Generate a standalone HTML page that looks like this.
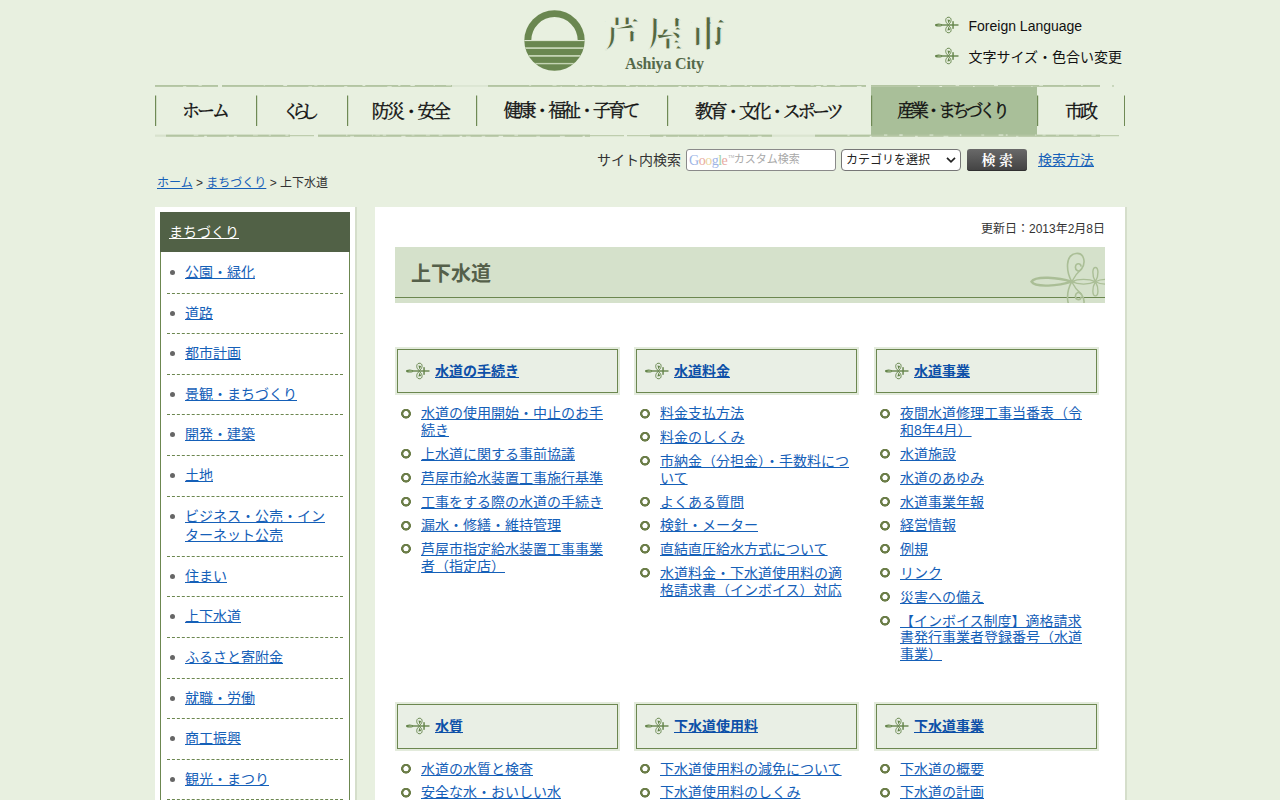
<!DOCTYPE html>
<html lang="ja">
<head>
<meta charset="utf-8">
<title>上下水道 - 芦屋市</title>
<style>
*{box-sizing:border-box}
html,body{margin:0;padding:0}
body{background:#e8f0e0;font-family:"Liberation Sans","Noto Sans CJK JP",sans-serif;font-size:14px;color:#333;width:1280px;height:800px;overflow:hidden;position:relative}
a{color:#1560b8}
#wrap{position:absolute;left:155px;top:0;width:970px;height:800px}
/* header */
#logo{position:absolute;left:368px;top:9px;width:210px;height:66px}
#hlinks{position:absolute;left:780px;top:0;width:200px}
#hlinks div{position:absolute;left:0;white-space:nowrap;color:#111;font-size:14px;line-height:20px}
#hlinks .ico{position:absolute;left:0;top:0}
#hlinks span{position:absolute;left:33.5px;top:0}
/* nav */
#nav{position:absolute;left:0;top:86px;width:970px;height:50px;white-space:nowrap;font-size:0}
#nav .nv{display:inline-block;height:50px;position:relative;vertical-align:top}
#nav .nv svg{display:block;position:relative}
#nav .act{background:#a9bf99}
#nav .sep{position:absolute;top:10px;width:1px;height:30px;background:#7a9160}
#navt,#navb{position:absolute;left:0}
/* search */
#search{position:absolute;left:0;top:149px;width:970px;height:22px}
#search .lbl{position:absolute;left:442px;top:0;line-height:22px;font-size:14px;color:#333}
#search .inp{position:absolute;left:531px;top:0;width:150px;height:22px;border:1px solid #8a8a8a;border-radius:3px;background:#fff}
#search .sel{position:absolute;left:686px;top:0;width:120px;height:22px;border:1px solid #767676;border-radius:4px;background:#fff;font-size:12px;line-height:20px;color:#222;padding-left:4px}
#search .btn{position:absolute;left:812px;top:0;width:60px;height:22px;border-radius:3px;background:linear-gradient(#696969,#424242);box-shadow:inset 0 -1px 0 #303030}
#search .how{position:absolute;left:883px;top:0;line-height:22px;font-size:14px}
/* breadcrumb */
#crumb{position:absolute;left:2px;top:174px;font-size:12px;line-height:18px;color:#333}
/* sidebar */
#side{position:absolute;left:0;top:207px;width:200px;height:620px;background:#fff;padding:5px;box-shadow:2px 0 0 #d5decb}
#side .box{border:1px solid #6c8750;border-top:0;height:620px}
#side h3{margin:0 -1px;height:40px;background:#516146;font-weight:normal;font-size:14px;line-height:40px;padding-left:9px}
#side h3 a{color:#fff}
#side ul{list-style:none;margin:0;padding:1px 6px 0 6px}
#side li{position:relative;padding:10px 10px 10px 18px;line-height:19.6px;border-bottom:1px dashed #6c8750}
#side li:before{content:"";position:absolute;left:3px;top:17px;width:5px;height:5px;border-radius:50%;background:#666}
/* main */
#main{position:absolute;left:220px;top:207px;width:750px;height:620px;background:#fff;box-shadow:2px 0 0 #d5decb}
#upd{position:absolute;right:20px;top:13px;font-size:12px;line-height:18px;color:#333}
#h1{position:absolute;left:20px;top:40px;width:710px;height:56px;background:#d5e1cb;overflow:hidden}
#h1 .ln{position:absolute;left:0;top:50px;width:710px;height:1px;background:#6c8750}
#h1 h1{margin:0;position:absolute;left:16px;top:13px;font-size:20px;line-height:28px;color:#55604a;font-weight:bold}
#h1 svg{position:absolute;right:0;top:0}
#cols{position:absolute;left:20px;top:140px;width:730px}
.col{float:left;width:225px;margin-right:14px;margin-bottom:32.25px}
.col.c2{margin-right:15px}
.col.c3{margin-right:0}
.col.clr{clear:left}
.col h2{margin:0 0 10px 0;border:2px solid #e3ebdc;font-size:14px;height:48.4px}
.col h2 .in{display:block;height:44.4px;border:1px solid #6c8750;background:#e9efe5;position:relative}
.col h2 .ico{position:absolute;left:8px;top:12px}
.col h2 a{position:absolute;left:37px;top:11px;line-height:20px;font-weight:bold;color:#0d50a8;white-space:nowrap}
.col ul{list-style:none;margin:0;padding:0}
.col li{position:relative;padding-left:26px;line-height:16.8px;margin-bottom:7px;width:216px}
.col li:before{content:"";position:absolute;left:5px;top:2.3px;width:12px;height:12px;background:radial-gradient(circle at 6px 5.7px,rgba(107,125,72,0) 2.3px,#6b7d48 2.9px,#6b7d48 4.6px,rgba(107,125,72,0) 5.2px)}
</style>
</head>
<body>
<div id="wrap">
 <div id="logo"><svg width="210" height="66" viewBox="0 0 210 66" style="position:absolute;left:0;top:0"><title>芦屋市</title><defs><clipPath id="lc"><circle cx="31.5" cy="31.5" r="30.2"/></clipPath></defs><circle cx="31.5" cy="31.5" r="30.2" fill="#6a8750"/><path d="M8.3 31.3A23.2 23.2 0 0 1 54.700 31.300z" fill="#e8f0e0"/><g clip-path="url(#lc)"><rect x="0" y="31" width="64" height="1.100" fill="#dbe5cf"/><rect x="0" y="38.2" width="64" height="1.8" fill="#c3d3b3"/><rect x="0" y="46" width="64" height="1.8" fill="#c3d3b3"/><rect x="0" y="53.9" width="64" height="1.4" fill="#c3d3b3"/></g><text x="81.3 124.5 167.5" y="37.900" font-family="'Liberation Serif','Noto Serif CJK SC',serif" font-weight="bold" font-size="35.500" fill="#546842" stroke="#e8f0e0" stroke-width="1">芦屋市</text></svg><div style="position:absolute;left:102px;top:45px;font-family:'Liberation Serif',serif;font-weight:bold;font-size:16px;line-height:20px;color:#55694a;white-space:nowrap;letter-spacing:-0.150px">Ashiya City</div></div>
 <div id="hlinks">
  <div style="top:16px"><svg class="ico" width="24" height="18" viewBox="0 0 24 18"><g fill="none" stroke="#64844a" stroke-width="0.950"><path d="M13.300 8.600C10.100 6.500 9.800 2 12.900 1.300c3-.6 4.200 2.700 2.200 5.500-.5.700-1.200 1.300-1.800 1.800z"/><path d="M13.300 9.400c-3.200 2.100-3.500 6.600-.4 7.300 3 .6 4.200-2.700 2.200-5.500-.5-.7-1.200-1.300-1.800-1.800z"/></g><g fill="#64844a"><path d="M12.400 3.600l2.800.5-1.700 3.300z"/><path d="M12.400 14.400l2.800-.5-1.700-3.300z"/><rect x="3.500" y="8.300" width="20" height="1.400"/><ellipse cx="3.600" cy="9" rx="3.600" ry="1.500"/><rect x="17.200" y="5.200" width="1.700" height="7.600" opacity=".85"/></g><ellipse cx="4.400" cy="9" rx="2.200" ry=".5" fill="#b2c69c"/></svg><span>Foreign Language</span></div>
  <div style="top:47px"><svg class="ico" width="24" height="18" viewBox="0 0 24 18"><g fill="none" stroke="#64844a" stroke-width="0.950"><path d="M13.300 8.600C10.100 6.500 9.800 2 12.900 1.300c3-.6 4.200 2.700 2.200 5.500-.5.700-1.200 1.300-1.800 1.800z"/><path d="M13.300 9.400c-3.200 2.100-3.500 6.600-.4 7.300 3 .6 4.200-2.700 2.200-5.500-.5-.7-1.200-1.300-1.800-1.800z"/></g><g fill="#64844a"><path d="M12.400 3.600l2.800.5-1.700 3.300z"/><path d="M12.400 14.400l2.800-.5-1.700-3.300z"/><rect x="3.500" y="8.300" width="20" height="1.400"/><ellipse cx="3.600" cy="9" rx="3.600" ry="1.500"/><rect x="17.200" y="5.200" width="1.700" height="7.600" opacity=".85"/></g><ellipse cx="4.400" cy="9" rx="2.200" ry=".5" fill="#b2c69c"/></svg><span>文字サイズ・色合い変更</span></div>
 </div>
 <div id="nav"><svg id="navt" width="970" height="54" viewBox="0 0 970 54" style="top:-2px;pointer-events:none;position:absolute;z-index:2"><rect x="0.0" y="1.00" width="63.0" height="1.90" fill="#b3c5a2" opacity="1"/><rect x="28.1" y="2.04" width="3.2" height="0.95" fill="#e8f0e0" opacity="0.73"/><rect x="43.5" y="0.90" width="3.3" height="0.95" fill="#e8f0e0" opacity="0.76"/><rect x="67.0" y="1.00" width="230.0" height="1.90" fill="#b3c5a2" opacity="1"/><rect x="108.7" y="0.90" width="1.4" height="0.95" fill="#e8f0e0" opacity="0.55"/><rect x="128.3" y="0.90" width="3.8" height="0.95" fill="#e8f0e0" opacity="0.99"/><rect x="153.4" y="2.04" width="3.6" height="0.95" fill="#e8f0e0" opacity="0.58"/><rect x="159.3" y="0.90" width="3.1" height="0.95" fill="#e8f0e0" opacity="0.60"/><rect x="169.2" y="0.90" width="1.1" height="0.95" fill="#e8f0e0" opacity="0.72"/><rect x="189.2" y="2.04" width="3.1" height="0.95" fill="#e8f0e0" opacity="0.75"/><rect x="207.5" y="0.90" width="2.8" height="0.95" fill="#e8f0e0" opacity="1.00"/><rect x="232.3" y="2.04" width="4.4" height="0.95" fill="#e8f0e0" opacity="0.66"/><rect x="243.2" y="0.90" width="2.2" height="0.95" fill="#e8f0e0" opacity="0.88"/><rect x="255.4" y="0.90" width="4.4" height="0.95" fill="#e8f0e0" opacity="0.98"/><rect x="278.7" y="0.90" width="1.0" height="0.95" fill="#e8f0e0" opacity="0.96"/><rect x="291.1" y="0.90" width="4.9" height="0.95" fill="#e8f0e0" opacity="0.54"/><rect x="297.0" y="1.00" width="36.0" height="1.90" fill="#b3c5a2" opacity="0.22"/><rect x="333.0" y="1.00" width="378.0" height="1.90" fill="#b3c5a2" opacity="1"/><rect x="374.1" y="0.90" width="2.1" height="0.95" fill="#e8f0e0" opacity="0.67"/><rect x="397.5" y="0.90" width="4.0" height="0.95" fill="#e8f0e0" opacity="0.62"/><rect x="405.6" y="2.04" width="1.2" height="0.95" fill="#e8f0e0" opacity="0.59"/><rect x="420.0" y="0.90" width="2.8" height="0.95" fill="#e8f0e0" opacity="0.87"/><rect x="427.4" y="0.90" width="3.6" height="0.95" fill="#e8f0e0" opacity="0.71"/><rect x="437.2" y="2.04" width="2.1" height="0.95" fill="#e8f0e0" opacity="0.90"/><rect x="447.4" y="0.90" width="4.5" height="0.95" fill="#e8f0e0" opacity="0.70"/><rect x="471.0" y="0.90" width="3.6" height="0.95" fill="#e8f0e0" opacity="0.99"/><rect x="480.8" y="2.04" width="2.0" height="0.95" fill="#e8f0e0" opacity="0.66"/><rect x="490.8" y="0.90" width="1.3" height="0.95" fill="#e8f0e0" opacity="0.79"/><rect x="499.0" y="0.90" width="3.4" height="0.95" fill="#e8f0e0" opacity="0.73"/><rect x="523.5" y="2.04" width="2.9" height="0.95" fill="#e8f0e0" opacity="0.93"/><rect x="532.1" y="2.04" width="1.6" height="0.95" fill="#e8f0e0" opacity="0.91"/><rect x="540.7" y="2.04" width="1.8" height="0.95" fill="#e8f0e0" opacity="0.97"/><rect x="548.4" y="2.04" width="4.8" height="0.95" fill="#e8f0e0" opacity="0.80"/><rect x="563.7" y="0.90" width="1.4" height="0.95" fill="#e8f0e0" opacity="0.98"/><rect x="571.8" y="0.90" width="3.8" height="0.95" fill="#e8f0e0" opacity="0.91"/><rect x="589.6" y="0.90" width="2.2" height="0.95" fill="#e8f0e0" opacity="0.86"/><rect x="595.1" y="2.04" width="1.9" height="0.95" fill="#e8f0e0" opacity="0.93"/><rect x="611.3" y="2.04" width="2.1" height="0.95" fill="#e8f0e0" opacity="0.60"/><rect x="615.8" y="0.90" width="2.1" height="0.95" fill="#e8f0e0" opacity="0.53"/><rect x="623.4" y="2.04" width="2.5" height="0.95" fill="#e8f0e0" opacity="0.57"/><rect x="635.1" y="2.04" width="4.6" height="0.95" fill="#e8f0e0" opacity="0.83"/><rect x="655.5" y="0.90" width="3.3" height="0.95" fill="#e8f0e0" opacity="0.52"/><rect x="661.2" y="2.04" width="4.6" height="0.95" fill="#e8f0e0" opacity="0.98"/><rect x="668.3" y="0.90" width="3.5" height="0.95" fill="#e8f0e0" opacity="0.87"/><rect x="680.2" y="0.90" width="5.0" height="0.95" fill="#e8f0e0" opacity="0.77"/><rect x="701.9" y="2.04" width="4.6" height="0.95" fill="#e8f0e0" opacity="0.85"/><rect x="716.0" y="1.00" width="229.0" height="1.90" fill="#b3c5a2" opacity="1"/><rect x="762.6" y="2.04" width="2.4" height="0.95" fill="#e8f0e0" opacity="0.95"/><rect x="784.4" y="2.04" width="2.7" height="0.95" fill="#e8f0e0" opacity="0.93"/><rect x="800.6" y="0.90" width="3.5" height="0.95" fill="#e8f0e0" opacity="0.79"/><rect x="818.2" y="2.04" width="1.3" height="0.95" fill="#e8f0e0" opacity="1.00"/><rect x="839.1" y="0.90" width="3.9" height="0.95" fill="#e8f0e0" opacity="0.87"/><rect x="856.7" y="2.04" width="2.8" height="0.95" fill="#e8f0e0" opacity="0.54"/><rect x="876.4" y="2.04" width="1.1" height="0.95" fill="#e8f0e0" opacity="0.74"/><rect x="884.2" y="0.90" width="3.8" height="0.95" fill="#e8f0e0" opacity="0.81"/><rect x="908.4" y="0.90" width="2.0" height="0.95" fill="#e8f0e0" opacity="0.65"/><rect x="926.0" y="0.90" width="1.8" height="0.95" fill="#e8f0e0" opacity="0.95"/><rect x="957.0" y="1.00" width="2.0" height="1.90" fill="#b3c5a2" opacity="0.6"/><rect x="0.0" y="50.60" width="11.0" height="2.20" fill="#b3c5a2" opacity="0.3"/><rect x="11.0" y="50.60" width="124.0" height="2.20" fill="#b3c5a2" opacity="1"/><rect x="38.7" y="50.50" width="4.6" height="1.10" fill="#e8f0e0" opacity="0.83"/><rect x="49.2" y="51.81" width="2.7" height="1.10" fill="#e8f0e0" opacity="0.96"/><rect x="71.5" y="51.81" width="2.5" height="1.10" fill="#e8f0e0" opacity="0.66"/><rect x="78.8" y="51.81" width="3.0" height="1.10" fill="#e8f0e0" opacity="0.92"/><rect x="98.0" y="50.50" width="4.8" height="1.10" fill="#e8f0e0" opacity="0.58"/><rect x="113.8" y="50.50" width="2.1" height="1.10" fill="#e8f0e0" opacity="0.71"/><rect x="130.4" y="50.50" width="3.0" height="1.10" fill="#e8f0e0" opacity="0.92"/><rect x="135.0" y="51.20" width="24.0" height="1.00" fill="#b3c5a2" opacity="1"/><rect x="163.0" y="50.60" width="272.0" height="2.20" fill="#b3c5a2" opacity="1"/><rect x="191.1" y="50.50" width="1.3" height="1.10" fill="#e8f0e0" opacity="0.94"/><rect x="195.2" y="51.81" width="3.8" height="1.10" fill="#e8f0e0" opacity="0.65"/><rect x="216.9" y="50.50" width="1.1" height="1.10" fill="#e8f0e0" opacity="0.73"/><rect x="220.5" y="50.50" width="4.3" height="1.10" fill="#e8f0e0" opacity="0.57"/><rect x="227.7" y="50.50" width="3.5" height="1.10" fill="#e8f0e0" opacity="0.81"/><rect x="246.3" y="51.81" width="4.2" height="1.10" fill="#e8f0e0" opacity="0.84"/><rect x="256.6" y="50.50" width="2.9" height="1.10" fill="#e8f0e0" opacity="0.51"/><rect x="270.9" y="50.50" width="3.9" height="1.10" fill="#e8f0e0" opacity="0.64"/><rect x="283.7" y="50.50" width="3.8" height="1.10" fill="#e8f0e0" opacity="0.81"/><rect x="304.6" y="51.81" width="2.6" height="1.10" fill="#e8f0e0" opacity="0.95"/><rect x="310.9" y="51.81" width="4.7" height="1.10" fill="#e8f0e0" opacity="0.56"/><rect x="326.7" y="51.81" width="3.5" height="1.10" fill="#e8f0e0" opacity="0.69"/><rect x="343.6" y="51.81" width="4.5" height="1.10" fill="#e8f0e0" opacity="0.97"/><rect x="359.4" y="50.50" width="3.6" height="1.10" fill="#e8f0e0" opacity="0.86"/><rect x="381.3" y="51.81" width="3.6" height="1.10" fill="#e8f0e0" opacity="0.61"/><rect x="404.9" y="51.81" width="4.9" height="1.10" fill="#e8f0e0" opacity="0.77"/><rect x="427.6" y="51.81" width="2.3" height="1.10" fill="#e8f0e0" opacity="0.93"/><rect x="435.0" y="51.20" width="34.0" height="1.00" fill="#b3c5a2" opacity="1"/><rect x="472.0" y="51.20" width="23.0" height="1.00" fill="#b3c5a2" opacity="1"/><rect x="495.0" y="50.60" width="122.0" height="2.20" fill="#b3c5a2" opacity="1"/><rect x="508.3" y="51.81" width="2.8" height="1.10" fill="#e8f0e0" opacity="0.88"/><rect x="522.8" y="51.81" width="1.1" height="1.10" fill="#e8f0e0" opacity="0.53"/><rect x="541.9" y="50.50" width="1.7" height="1.10" fill="#e8f0e0" opacity="0.89"/><rect x="548.4" y="50.50" width="1.6" height="1.10" fill="#e8f0e0" opacity="0.86"/><rect x="568.8" y="51.81" width="3.8" height="1.10" fill="#e8f0e0" opacity="0.75"/><rect x="593.6" y="50.50" width="1.3" height="1.10" fill="#e8f0e0" opacity="0.76"/><rect x="602.7" y="51.81" width="3.9" height="1.10" fill="#e8f0e0" opacity="0.76"/><rect x="617.0" y="50.60" width="43.0" height="2.20" fill="#b3c5a2" opacity="0.25"/><rect x="660.0" y="50.60" width="285.0" height="2.20" fill="#b3c5a2" opacity="1"/><rect x="692.4" y="50.50" width="2.2" height="1.10" fill="#e8f0e0" opacity="0.92"/><rect x="714.7" y="51.81" width="1.8" height="1.10" fill="#e8f0e0" opacity="0.98"/><rect x="729.0" y="50.50" width="3.3" height="1.10" fill="#e8f0e0" opacity="0.77"/><rect x="744.3" y="50.50" width="3.4" height="1.10" fill="#e8f0e0" opacity="0.98"/><rect x="760.1" y="51.81" width="2.6" height="1.10" fill="#e8f0e0" opacity="0.78"/><rect x="774.5" y="50.50" width="3.8" height="1.10" fill="#e8f0e0" opacity="0.77"/><rect x="788.5" y="51.81" width="4.8" height="1.10" fill="#e8f0e0" opacity="0.63"/><rect x="804.8" y="50.50" width="1.5" height="1.10" fill="#e8f0e0" opacity="0.91"/><rect x="826.3" y="50.50" width="2.9" height="1.10" fill="#e8f0e0" opacity="0.60"/><rect x="843.6" y="50.50" width="4.7" height="1.10" fill="#e8f0e0" opacity="0.89"/><rect x="850.8" y="50.50" width="1.8" height="1.10" fill="#e8f0e0" opacity="0.84"/><rect x="861.0" y="51.81" width="2.4" height="1.10" fill="#e8f0e0" opacity="0.55"/><rect x="880.0" y="50.50" width="1.5" height="1.10" fill="#e8f0e0" opacity="0.63"/><rect x="887.5" y="50.50" width="3.1" height="1.10" fill="#e8f0e0" opacity="0.69"/><rect x="900.9" y="50.50" width="3.1" height="1.10" fill="#e8f0e0" opacity="0.60"/><rect x="918.6" y="50.50" width="3.6" height="1.10" fill="#e8f0e0" opacity="0.93"/><rect x="936.4" y="50.50" width="4.4" height="1.10" fill="#e8f0e0" opacity="0.87"/><rect x="945.0" y="51.20" width="19.0" height="1.00" fill="#b3c5a2" opacity="1"/><rect x="0" y="11.5" width="1.2" height="30.5" fill="#6f8a55"/><rect x="101" y="11.5" width="1.2" height="30.5" fill="#6f8a55"/><rect x="192" y="11.5" width="1.2" height="30.5" fill="#6f8a55"/><rect x="321" y="11.5" width="1.2" height="30.5" fill="#6f8a55"/><rect x="512" y="11.5" width="1.2" height="30.5" fill="#6f8a55"/><rect x="716" y="11.5" width="1.2" height="30.5" fill="#6f8a55"/><rect x="882" y="11.5" width="1.2" height="30.5" fill="#6f8a55"/><rect x="969" y="11.5" width="1.2" height="30.5" fill="#6f8a55"/></svg><div class="act" style="position:absolute;left:716px;top:0.700px;width:166px;height:48.800px"></div><svg width="970" height="50" viewBox="0 0 970 50" style="position:absolute;left:0;top:0" fill="#111" stroke="#111" stroke-width="0.35" font-family="'Liberation Serif','Noto Serif CJK SC',serif" font-size="18" text-anchor="middle"><g><title>ホーム</title><text x="51" y="31.400" textLength="48" lengthAdjust="spacing">ホーム</text></g><g><title>くらし</title><text x="145.8" y="31.500" textLength="37" lengthAdjust="spacing">くらし</text></g><g><title>防災・安全</title><text x="256.3" y="31.500" textLength="79" lengthAdjust="spacing">防災・安全</text></g><g><title>健康・福祉・子育て</title><text x="417" y="31.400" textLength="137" lengthAdjust="spacing">健康・福祉・子育て</text></g><g><title>教育・文化・スポーツ</title><text x="614.5" y="31.500" textLength="149" lengthAdjust="spacing">教育・文化・スポーツ</text></g><g><title>産業・まちづくり</title><text x="798.8" y="31.400" textLength="113" lengthAdjust="spacing">産業・まちづくり</text></g><g><title>市政</title><text x="926.5" y="31.500" textLength="33" lengthAdjust="spacing">市政</text></g></svg></div>
 <div id="search">
  <span class="lbl">サイト内検索</span>
  <div class="inp"><span style="position:absolute;left:2px;top:-3px;font-family:'Liberation Serif',serif;font-size:14px;line-height:19px;letter-spacing:-0.500px;white-space:nowrap"><span style="color:#9db4e6">G</span><span style="color:#e8a9a0">o</span><span style="color:#ecd79b">o</span><span style="color:#9db4e6">g</span><span style="color:#a6d1a4">l</span><span style="color:#e8a9a0">e</span><span style="font-size:4px;color:#aaa;vertical-align:6.500px;letter-spacing:0;margin-left:1px">TM</span></span><span style="position:absolute;left:46.800px;top:-0.600px;font-size:11px;line-height:20px;color:#a8a8a8;white-space:nowrap">カスタム検索</span></div>
  <div class="sel">カテゴリを選択<svg width="12" height="8" viewBox="0 0 12 8" style="position:absolute;right:2.600px;top:5.800px"><path d="M2 1.800L6 5.800l4-4" fill="none" stroke="#222" stroke-width="1.700"/></svg></div>
  <div class="btn"><svg width="60" height="22" viewBox="0 0 60 22" style="position:absolute;left:0;top:0"><title>検索</title><text x="14.5 32" y="16" font-family="'Liberation Serif','Noto Serif CJK SC',serif" font-weight="bold" font-size="14" fill="#fff">検索</text></svg></div>
  <a class="how" href="#">検索方法</a>
 </div>
 <div id="crumb"><a href="#">ホーム</a> &gt; <a href="#">まちづくり</a> &gt; 上下水道</div>
 <div id="side"><div class="box">
  <h3><a href="#">まちづくり</a></h3>
  <ul><li><a href="#">公園・緑化</a></li><li><a href="#">道路</a></li><li><a href="#">都市計画</a></li><li><a href="#">景観・まちづくり</a></li><li><a href="#">開発・建築</a></li><li><a href="#">土地</a></li><li><a href="#">ビジネス・公売・インターネット公売</a></li><li><a href="#">住まい</a></li><li><a href="#">上下水道</a></li><li><a href="#">ふるさと寄附金</a></li><li><a href="#">就職・労働</a></li><li><a href="#">商工振興</a></li><li><a href="#">観光・まつり</a></li><li><a href="#">その他</a></li></ul>
 </div></div>
 <div id="main">
  <div id="upd">更新日：2013年2月8日</div>
  <div id="h1"><div class="ln"></div><svg width="90" height="56" viewBox="620 0 90 56"><g fill="none" stroke="#aabe96" stroke-linecap="round"><path d="M676.7 34.700C664 30.500 640 28.500 636.500 34.700 640 40.900 664 38.900 676.700 34.700z" stroke-width="2.400"/><path d="M676.700 34.700C671 24 670 8 681 6.500c8.500-1 10 9.500 5.500 15.500-3 4-6.500 1-6-2.500 .5-3.500 5-3.500 5.500-.5" stroke-width="1.600"/><path d="M676.700 34.700C679 30 683 25 686.500 22" stroke-width="1.400"/><path d="M676.700 34.700C671 45.400 670 61.400 681 62.900c8.500 1 10-9.500 5.500-15.500-3-4-6.500-1-6 2.500 .5 3.500 5 3.500 5.500 .5" stroke-width="1.600"/><path d="M676.700 34.700C679 39.400 683 44.400 686.500 47.400" stroke-width="1.400"/><path d="M676.700 34.700C683 31.500 694 31.500 700.400 34.700 694 37.900 683 37.900 676.700 34.700z" stroke-width="1.300"/><path d="M700.400 34.700C696.500 28 697.500 20.500 700.400 20.500 703.300 20.500 704.300 28 700.400 34.700z" stroke-width="1.400"/><path d="M700.400 34.700C696.500 41.400 697.500 48.900 700.400 48.900 703.300 48.900 704.300 41.400 700.400 34.700z" stroke-width="1.400"/><path d="M700.400 34.700C706 31.500 714 31.500 720 34.700 714 37.900 706 37.900 700.400 34.700z" stroke-width="1.300"/></g></svg><h1>上下水道</h1></div>
  <div id="cols"><div class="col clr"><h2><span class="in"><svg class="ico" width="24" height="18" viewBox="0 0 24 18"><g fill="none" stroke="#64844a" stroke-width="0.950"><path d="M13.300 8.600C10.100 6.500 9.800 2 12.900 1.300c3-.6 4.200 2.700 2.200 5.500-.5.700-1.200 1.300-1.800 1.800z"/><path d="M13.300 9.400c-3.200 2.100-3.500 6.600-.4 7.300 3 .6 4.200-2.700 2.200-5.500-.5-.7-1.200-1.300-1.800-1.800z"/></g><g fill="#64844a"><path d="M12.400 3.600l2.800.5-1.700 3.300z"/><path d="M12.400 14.400l2.800-.5-1.700-3.300z"/><rect x="3.500" y="8.300" width="20" height="1.400"/><ellipse cx="3.600" cy="9" rx="3.600" ry="1.500"/><rect x="17.200" y="5.200" width="1.700" height="7.600" opacity=".85"/></g><ellipse cx="4.400" cy="9" rx="2.200" ry=".5" fill="#b2c69c"/></svg><a href="#">水道の手続き</a></span></h2><ul><li><a href="#">水道の使用開始・中止のお手続き</a></li><li><a href="#">上水道に関する事前協議</a></li><li><a href="#">芦屋市給水装置工事施行基準</a></li><li><a href="#">工事をする際の水道の手続き</a></li><li><a href="#">漏水・修繕・維持管理</a></li><li><a href="#">芦屋市指定給水装置工事事業者（指定店）</a></li></ul></div><div class="col c2"><h2><span class="in"><svg class="ico" width="24" height="18" viewBox="0 0 24 18"><g fill="none" stroke="#64844a" stroke-width="0.950"><path d="M13.300 8.600C10.100 6.500 9.800 2 12.900 1.300c3-.6 4.200 2.700 2.200 5.500-.5.700-1.200 1.300-1.800 1.800z"/><path d="M13.300 9.400c-3.200 2.100-3.500 6.600-.4 7.300 3 .6 4.200-2.700 2.200-5.500-.5-.7-1.200-1.300-1.800-1.800z"/></g><g fill="#64844a"><path d="M12.400 3.600l2.800.5-1.700 3.300z"/><path d="M12.400 14.400l2.800-.5-1.700-3.300z"/><rect x="3.500" y="8.300" width="20" height="1.400"/><ellipse cx="3.600" cy="9" rx="3.600" ry="1.500"/><rect x="17.200" y="5.200" width="1.700" height="7.600" opacity=".85"/></g><ellipse cx="4.400" cy="9" rx="2.200" ry=".5" fill="#b2c69c"/></svg><a href="#">水道料金</a></span></h2><ul><li><a href="#">料金支払方法</a></li><li><a href="#">料金のしくみ</a></li><li><a href="#">市納金（分担金）・手数料について</a></li><li><a href="#">よくある質問</a></li><li><a href="#">検針・メーター</a></li><li><a href="#">直結直圧給水方式について</a></li><li><a href="#">水道料金・下水道使用料の適格請求書（インボイス）対応</a></li></ul></div><div class="col c3"><h2><span class="in"><svg class="ico" width="24" height="18" viewBox="0 0 24 18"><g fill="none" stroke="#64844a" stroke-width="0.950"><path d="M13.300 8.600C10.100 6.500 9.800 2 12.900 1.300c3-.6 4.200 2.700 2.200 5.500-.5.700-1.200 1.300-1.800 1.800z"/><path d="M13.300 9.400c-3.200 2.100-3.500 6.600-.4 7.300 3 .6 4.200-2.700 2.200-5.500-.5-.7-1.200-1.300-1.800-1.800z"/></g><g fill="#64844a"><path d="M12.400 3.600l2.800.5-1.700 3.300z"/><path d="M12.400 14.400l2.800-.5-1.700-3.300z"/><rect x="3.500" y="8.300" width="20" height="1.400"/><ellipse cx="3.600" cy="9" rx="3.600" ry="1.500"/><rect x="17.200" y="5.200" width="1.700" height="7.600" opacity=".85"/></g><ellipse cx="4.400" cy="9" rx="2.200" ry=".5" fill="#b2c69c"/></svg><a href="#">水道事業</a></span></h2><ul><li><a href="#">夜間水道修理工事当番表（令和8年4月）</a></li><li><a href="#">水道施設</a></li><li><a href="#">水道のあゆみ</a></li><li><a href="#">水道事業年報</a></li><li><a href="#">経営情報</a></li><li><a href="#">例規</a></li><li><a href="#">リンク</a></li><li><a href="#">災害への備え</a></li><li><a href="#">【インボイス制度】適格請求書発行事業者登録番号（水道事業）</a></li></ul></div><div class="col clr"><h2><span class="in"><svg class="ico" width="24" height="18" viewBox="0 0 24 18"><g fill="none" stroke="#64844a" stroke-width="0.950"><path d="M13.300 8.600C10.100 6.500 9.800 2 12.900 1.300c3-.6 4.200 2.700 2.200 5.500-.5.700-1.200 1.300-1.800 1.800z"/><path d="M13.300 9.400c-3.200 2.100-3.500 6.600-.4 7.300 3 .6 4.200-2.700 2.200-5.500-.5-.7-1.200-1.300-1.800-1.800z"/></g><g fill="#64844a"><path d="M12.400 3.600l2.800.5-1.700 3.300z"/><path d="M12.400 14.400l2.800-.5-1.700-3.300z"/><rect x="3.500" y="8.300" width="20" height="1.400"/><ellipse cx="3.600" cy="9" rx="3.600" ry="1.500"/><rect x="17.200" y="5.200" width="1.700" height="7.600" opacity=".85"/></g><ellipse cx="4.400" cy="9" rx="2.200" ry=".5" fill="#b2c69c"/></svg><a href="#">水質</a></span></h2><ul><li><a href="#">水道の水質と検査</a></li><li><a href="#">安全な水・おいしい水</a></li><li><a href="#">水質検査計画</a></li></ul></div><div class="col c2"><h2><span class="in"><svg class="ico" width="24" height="18" viewBox="0 0 24 18"><g fill="none" stroke="#64844a" stroke-width="0.950"><path d="M13.300 8.600C10.100 6.500 9.800 2 12.900 1.300c3-.6 4.200 2.700 2.200 5.500-.5.700-1.200 1.300-1.800 1.800z"/><path d="M13.300 9.400c-3.200 2.100-3.500 6.600-.4 7.300 3 .6 4.200-2.700 2.200-5.500-.5-.7-1.200-1.300-1.800-1.800z"/></g><g fill="#64844a"><path d="M12.400 3.600l2.800.5-1.700 3.300z"/><path d="M12.400 14.400l2.800-.5-1.700-3.300z"/><rect x="3.500" y="8.300" width="20" height="1.400"/><ellipse cx="3.600" cy="9" rx="3.600" ry="1.500"/><rect x="17.200" y="5.200" width="1.700" height="7.600" opacity=".85"/></g><ellipse cx="4.400" cy="9" rx="2.200" ry=".5" fill="#b2c69c"/></svg><a href="#">下水道使用料</a></span></h2><ul><li><a href="#">下水道使用料の減免について</a></li><li><a href="#">下水道使用料のしくみ</a></li><li><a href="#">下水道使用料の計算</a></li></ul></div><div class="col c3"><h2><span class="in"><svg class="ico" width="24" height="18" viewBox="0 0 24 18"><g fill="none" stroke="#64844a" stroke-width="0.950"><path d="M13.300 8.600C10.100 6.500 9.800 2 12.900 1.300c3-.6 4.200 2.700 2.200 5.500-.5.700-1.200 1.300-1.800 1.800z"/><path d="M13.300 9.400c-3.200 2.100-3.500 6.600-.4 7.300 3 .6 4.200-2.700 2.200-5.500-.5-.7-1.200-1.300-1.800-1.800z"/></g><g fill="#64844a"><path d="M12.400 3.600l2.800.5-1.700 3.300z"/><path d="M12.400 14.400l2.800-.5-1.700-3.300z"/><rect x="3.500" y="8.300" width="20" height="1.400"/><ellipse cx="3.600" cy="9" rx="3.600" ry="1.500"/><rect x="17.200" y="5.200" width="1.700" height="7.600" opacity=".85"/></g><ellipse cx="4.400" cy="9" rx="2.200" ry=".5" fill="#b2c69c"/></svg><a href="#">下水道事業</a></span></h2><ul><li><a href="#">下水道の概要</a></li><li><a href="#">下水道の計画</a></li><li><a href="#">下水道の施設</a></li></ul></div></div>
 </div>
</div>
</body>
</html>
